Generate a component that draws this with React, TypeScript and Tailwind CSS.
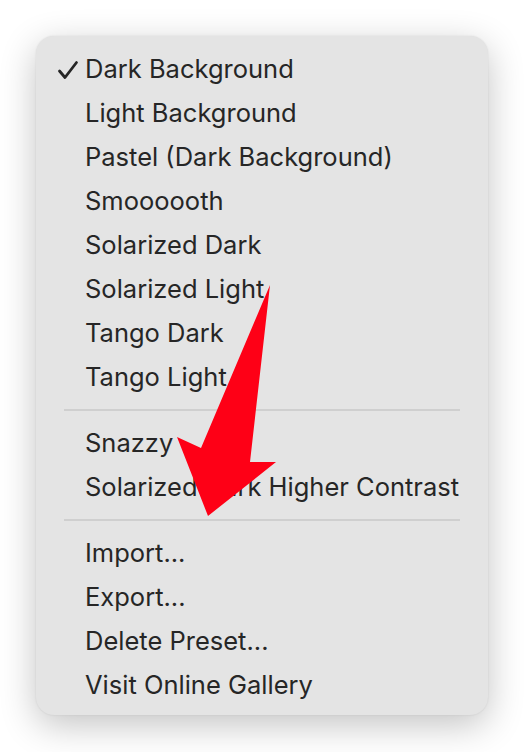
import React from "react";

const group1 = [
  "Dark Background",
  "Light Background",
  "Pastel (Dark Background)",
  "Smoooooth",
  "Solarized Dark",
  "Solarized Light",
  "Tango Dark",
  "Tango Light",
];
const group2 = ["Snazzy", "Solarized Dark Higher Contrast"];
const group3 = ["Import...", "Export...", "Delete Preset...", "Visit Online Gallery"];

function Item({ label, checked }: { label: string; checked?: boolean }) {
  return (
    <div className="flex h-[44px] items-center">
      <div className="flex w-[49px] justify-end pr-[6px]">
        {checked && (
          <svg width="22" height="20" viewBox="0 0 22 20" className="mt-[1px]">
            <path d="M2.5 11 L8 17.5 L19.5 2.5" fill="none" stroke="#262626" strokeWidth="2.8" strokeLinecap="round" strokeLinejoin="round" />
          </svg>
        )}
      </div>
      <span className="text-[25.5px] leading-none text-[#262626]">{label}</span>
    </div>
  );
}

function Sep() {
  return (
    <div className="flex h-[22px] items-center px-[28px]">
      <div className="h-[2px] w-full bg-[#cfcfcf]" />
    </div>
  );
}

export default function App() {
  return (
    <div
      className="relative h-[752px] w-[524px] bg-white p-[36px]"
      style={{ fontFamily: "Inter, 'Noto Sans', sans-serif" }}
    >
      <div className="flex h-[679px] w-[452px] flex-col rounded-[18px] bg-[#e4e4e4] pb-[8px] pt-[11px] shadow-[0_10px_36px_rgba(0,0,0,0.24),0_0_2px_rgba(0,0,0,0.1)]">
        {group1.map((l, i) => (
          <Item key={l} label={l} checked={i === 0} />
        ))}
        <Sep />
        {group2.map((l) => (
          <Item key={l} label={l} />
        ))}
        <Sep />
        {group3.map((l) => (
          <Item key={l} label={l} />
        ))}
      </div>
      <svg className="pointer-events-none absolute left-0 top-0" width="524" height="752">
        <polygon
          points="270,285 250,462 276,462 208,516 177,437 201,448"
          fill="#fe0016"
        />
      </svg>
    </div>
  );
}
